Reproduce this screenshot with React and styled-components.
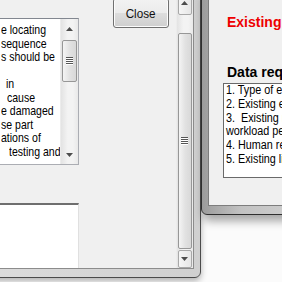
import React from 'react';
import styled, { createGlobalStyle } from 'styled-components';

const GlobalStyle = createGlobalStyle`
  html, body {
    margin: 0;
    padding: 0;
    background: #ffffff;
    overflow: hidden;
  }
  body {
    width: 282px;
    height: 282px;
    font-family: "Liberation Sans", Arial, sans-serif;
  }
`;

const Desktop = styled.div`
  position: relative;
  width: 282px;
  height: 282px;
  overflow: hidden;
  background: #fbfbfb;
`;

// windows on the desktop are placed at their own coordinates
const Window = styled.div`
  position: absolute;
  left: ${p => p.x}px;
  top: ${p => p.y}px;
  width: ${p => p.w}px;
  height: ${p => p.h}px;
  box-sizing: border-box;
  border: 1px solid ${p => (p.front ? '#2f2f2f' : '#4a4a4a')};
  border-radius: 0 0 6px 6px;
  background: ${p => (p.front
    ? 'linear-gradient(90deg, #9c9c9c, #c2c2c2 40%, #cfcfcf)'
    : 'linear-gradient(90deg, #dcdcdc, #d0d0d0)')};
  padding: 0 6px 8px 6px;
  box-shadow: ${p => (p.front
    ? '2px 6px 10px rgba(0,0,0,0.35)'
    : '0 3px 6px rgba(0,0,0,0.3)')};
  z-index: ${p => (p.front ? 2 : 1)};
`;

const Client = styled.div`
  box-sizing: border-box;
  height: 100%;
  background: #f0f0f0;
  border: 1px solid #8c8c8c;
  border-top: none;
  display: flex;
`;

const LeftColumn = styled.div`
  display: flex;
  flex-direction: column;
  width: 91px;
  padding-top: 27px;
`;

const TextArea = styled.div`
  position: relative;
  box-sizing: border-box;
  height: 147px;
  background: #fff;
  border: 1px solid #abadb3;
  border-top-color: #828790;
  border-left: none;
  display: flex;
  padding-left: 13px;
`;

const TextBody = styled.div`
  flex: 1;
  padding-top: 4px;
  font-size: 13px;
  line-height: 13.56px;
  color: #000;
  white-space: pre;
  overflow: hidden;
`;

// the text in the shot is narrower than Arial, so squeeze it a little
const Line = styled.div`
  height: ${p => p.h || 13.56}px;
  padding-left: ${p => p.indent || 0}px;
  & > span {
    display: inline-block;
    transform: scaleX(${p => p.squeeze || 0.81});
    transform-origin: left center;
  }
`;

const VScroll = styled.div`
  width: 17px;
  display: flex;
  flex-direction: column;
  background: linear-gradient(90deg, #e3e3e3, #f3f3f3 40%, #f3f3f3 70%, #e9e9e9);
  border-left: 1px solid #ececec;
`;

const ArrowButton = styled.div`
  box-sizing: border-box;
  height: ${p => p.h || 17}px;
  display: flex;
  align-items: center;
  justify-content: center;
  ${p => p.boxed && `
    margin: 0 1px;
    border: 1px solid #a8a8a8;
    border-radius: 2px;
    background: linear-gradient(90deg, #f6f6f6, #e6e6e6);
  `}
`;

const Thumb = styled.div`
  box-sizing: border-box;
  margin: ${p => p.gap}px 1px 0 1px;
  height: ${p => p.h}px;
  border: 1px solid #979797;
  border-radius: 2px;
  background: linear-gradient(90deg, #f4f4f4, #e2e2e2 50%, #d8d8d8);
  display: flex;
  align-items: center;
  justify-content: center;
`;

const Track = styled.div`
  flex: 1;
`;

const Grip = () => (
  <svg width="8" height="8" viewBox="0 0 8 8">
    {[0, 2, 4, 6].map(y => (
      <g key={y}>
        <rect x="0" y={y} width="7" height="1" fill="#555" />
        <rect x="0" y={y + 1} width="7" height="1" fill="#fff" />
      </g>
    ))}
  </svg>
);

const Arrow = ({ up }) => (
  <svg width="7" height="4" viewBox="0 0 7 4">
    <polygon points={up ? '3.5,0 7,4 0,4' : '0,0 7,0 3.5,4'} fill="#4d4d4d" />
  </svg>
);

const BottomBox = styled.div`
  margin-top: auto;
  height: 63px;
  background: #fff;
  border-top: 2px solid #6e6e6e;
  border-right: 1px solid #e0e0e0;
`;

const MiddleColumn = styled.div`
  width: 99px;
  padding: 7px 0 0 34px;
  box-sizing: border-box;
`;

const Button = styled.div`
  box-sizing: border-box;
  width: 56px;
  height: 30px;
  border: 1px solid #707070;
  border-radius: 3px;
  background: linear-gradient(180deg, #f2f2f2 0%, #ebebeb 50%, #dddddd 51%, #cfcfcf 100%);
  box-shadow: inset 0 0 0 1px #fcfcfc;
  font-size: 13px;
  color: #111;
  display: flex;
  align-items: center;
  justify-content: center;
  & > span {
    display: inline-block;
    transform: scaleX(0.9);
  }
`;

const RightClient = styled(Client)`
  flex-direction: column;
  padding: 0 0 0 18px;
  border-color: #7d7d7d;
`;

const Title = styled.div`
  margin-top: 23px;
  font-size: 14px;
  font-weight: bold;
  color: #ee0000;
  line-height: 16px;
  white-space: nowrap;
`;

const Label = styled.div`
  margin-top: 34px;
  font-size: 14px;
  font-weight: bold;
  color: #000;
  line-height: 16px;
  white-space: nowrap;
`;

const ListBox = styled.div`
  margin: 3px 0 0 -4px;
  box-sizing: border-box;
  height: 95px;
  background: #fff;
  border: 1px solid #6a6a6a;
  border-right: none;
  padding: 0 0 0 2px;
  font-size: 12px;
  line-height: 13.8px;
  color: #000;
  white-space: pre;
  overflow: hidden;
`;

const textLines = [
  { t: 'e locating' },
  { t: 'sequence' },
  { t: 's should be' },
  { t: '' },
  { t: 'in', indent: 5 },
  { t: 'cause', indent: 6 },
  { t: 'e damaged' },
  { t: 'se part' },
  { t: 'ations of' },
  { t: 'testing and', indent: 8 },
];

const listItems = [
  '1. Type of equipment',
  '2. Existing equipment',
  '3.  Existing maintenance',
  'workload per year',
  '4. Human resources',
  '5. Existing lists',
];

export default function App() {
  return (
    <Desktop>
      <GlobalStyle />
      <Window x={-20} y={-10} w={221} h={288}>
        <Client>
          <LeftColumn>
            <TextArea>
              <TextBody>
                {textLines.map((l, i) => (
                  <Line key={i} indent={l.indent}><span>{l.t}</span></Line>
                ))}
              </TextBody>
              <VScroll>
                <ArrowButton h={20}><Arrow up /></ArrowButton>
                <Thumb gap={1} h={42}><Grip /></Thumb>
                <Track />
                <ArrowButton h={18}><Arrow /></ArrowButton>
              </VScroll>
            </TextArea>
            <BottomBox />
          </LeftColumn>
          <MiddleColumn>
            <Button><span>Close</span></Button>
          </MiddleColumn>
          <VScroll>
            <ArrowButton boxed h={24}><Arrow up /></ArrowButton>
            <Thumb gap={18} h={216}><Grip /></Thumb>
            <Track />
            <ArrowButton boxed h={18}><Arrow /></ArrowButton>
          </VScroll>
        </Client>
      </Window>
      <Window x={201} y={-10} w={100} h={225} front>
        <RightClient>
          <Title>Existing Data</Title>
          <Label>Data required</Label>
          <ListBox>
            {listItems.map((t, i) => (
              <Line key={i} h={13.8} squeeze={0.9}><span>{t}</span></Line>
            ))}
          </ListBox>
        </RightClient>
      </Window>
    </Desktop>
  );
}
